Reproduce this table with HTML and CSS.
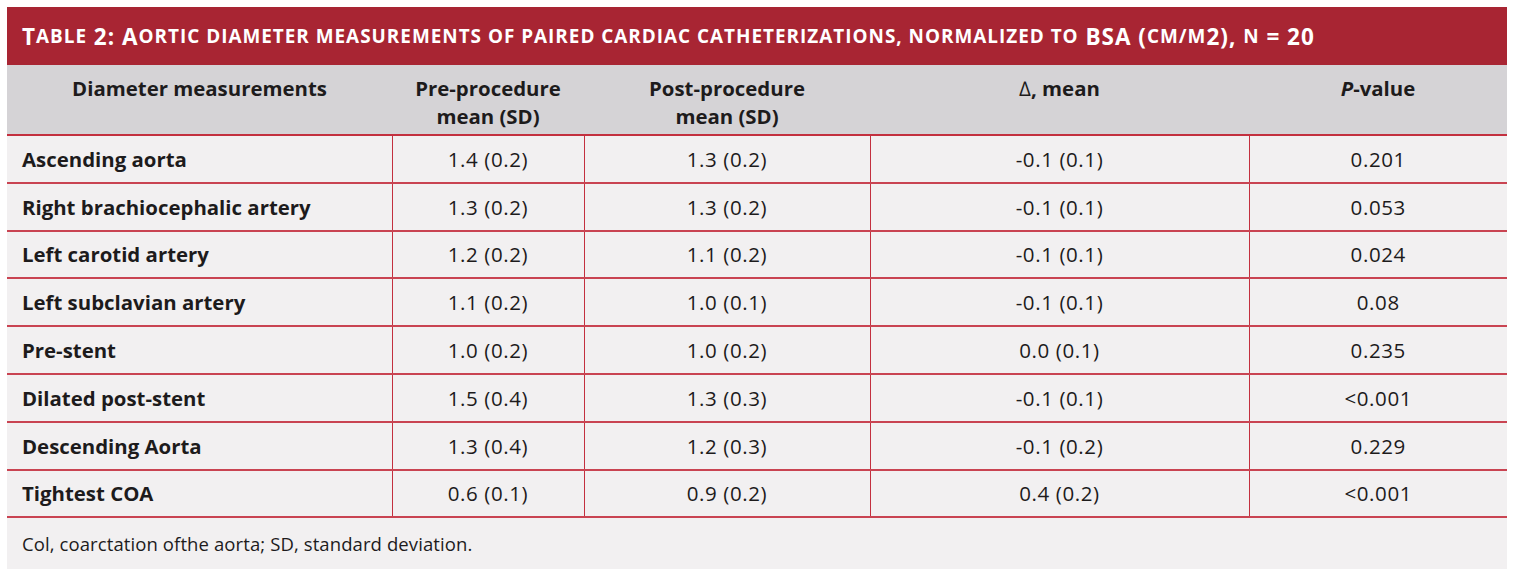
FILE: index.html
```html
<!DOCTYPE html>
<html lang="en">
<head>
<meta charset="utf-8">
<title>Table 2</title>
<link rel="stylesheet" href="styles.css">
</head>
<body>
<div class="wrap">
  <div class="title">T<span class="sc">able</span> 2: A<span class="sc">ortic diameter measurements of paired cardiac catheterizations, normalized to</span> BSA (<span class="sc">cm/m</span>2), <span class="sc">n</span> = 20</div>
  <table class="data">
    <colgroup>
      <col class="c1"><col class="c2"><col class="c3"><col class="c4"><col class="c5">
    </colgroup>
    <thead>
      <tr>
        <th>Diameter measurements</th>
        <th>Pre-procedure<br>mean (SD)</th>
        <th>Post-procedure<br>mean (SD)</th>
        <th><span class="delta">∆</span>, mean</th>
        <th><i>P</i>-value</th>
      </tr>
    </thead>
    <tbody>
      <tr><td class="lbl">Ascending aorta</td><td>1.4 (0.2)</td><td>1.3 (0.2)</td><td>-0.1 (0.1)</td><td>0.201</td></tr>
      <tr><td class="lbl">Right brachiocephalic artery</td><td>1.3 (0.2)</td><td>1.3 (0.2)</td><td>-0.1 (0.1)</td><td>0.053</td></tr>
      <tr><td class="lbl">Left carotid artery</td><td>1.2 (0.2)</td><td>1.1 (0.2)</td><td>-0.1 (0.1)</td><td>0.024</td></tr>
      <tr><td class="lbl">Left subclavian artery</td><td>1.1 (0.2)</td><td>1.0 (0.1)</td><td>-0.1 (0.1)</td><td>0.08</td></tr>
      <tr><td class="lbl">Pre-stent</td><td>1.0 (0.2)</td><td>1.0 (0.2)</td><td>0.0 (0.1)</td><td>0.235</td></tr>
      <tr><td class="lbl">Dilated post-stent</td><td>1.5 (0.4)</td><td>1.3 (0.3)</td><td>-0.1 (0.1)</td><td>&lt;0.001</td></tr>
      <tr><td class="lbl">Descending Aorta</td><td>1.3 (0.4)</td><td>1.2 (0.3)</td><td>-0.1 (0.2)</td><td>0.229</td></tr>
      <tr><td class="lbl">Tightest COA</td><td>0.6 (0.1)</td><td>0.9 (0.2)</td><td>0.4 (0.2)</td><td>&lt;0.001</td></tr>
    </tbody>
  </table>
  <div class="foot">Col, coarctation ofthe aorta; SD, standard deviation.</div>
</div>
</body>
</html>
```

FILE: styles.css
```css
html, body {
  margin: 0;
  padding: 0;
  background: #ffffff;
}
body {
  padding: 7px 11px 13px 7px;
  font-family: "Open Sans", "Noto Sans", sans-serif;
  color: #1d1b1c;
}
.wrap {
  width: 1500px;
  background: #f2f0f1;
}
.title {
  height: 58px;
  box-sizing: border-box;
  background: #a82533;
  color: #ffffff;
  font-weight: 700;
  font-size: 22.5px;
  letter-spacing: 1px;
  text-transform: uppercase;
  padding: 0 15px;
  display: flex;
  align-items: center;
  white-space: pre;
}
.title .sc {
  font-size: 0.84em;
}
.data {
  width: 100%;
  border-collapse: collapse;
  table-layout: fixed;
}
.c1 { width: 385px; }
.c2 { width: 192px; }
.c3 { width: 286px; }
.c4 { width: 379px; }
.c5 { width: 258px; }
.data th {
  background: #d5d3d6;
  font-weight: 700;
  font-size: 20.4px;
  line-height: 28px;
  height: 70px;
  box-sizing: border-box;
  padding: 9px 0 4px;
  vertical-align: top;
  text-align: center;
  border-bottom: 2px solid #c3303f;
}
.delta {
  font-weight: 400;
}
.data td {
  height: 47.8px;
  box-sizing: border-box;
  padding: 0;
  font-size: 20.5px;
  letter-spacing: 0.6px;
  text-align: center;
  border: 1px solid #c3303f;
  border-bottom: 2px solid #c94452;
}
.data tr td:first-child { border-left: none; }
.data tr td:last-child { border-right: none; }
.data td.lbl {
  text-align: left;
  padding-left: 15px;
  font-weight: 700;
  font-size: 20.4px;
  letter-spacing: 0;
}
.foot {
  height: 51px;
  box-sizing: border-box;
  padding: 0 15px;
  display: flex;
  align-items: center;
  font-size: 18.5px;
  letter-spacing: 0.1px;
}
```
